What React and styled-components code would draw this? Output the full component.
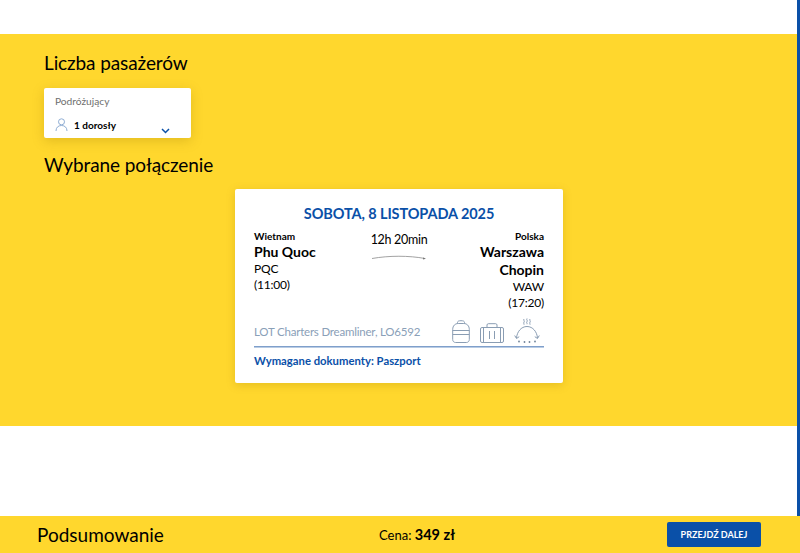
import React from 'react';
import styled, { createGlobalStyle } from 'styled-components';

const GlobalStyle = createGlobalStyle`
  html, body {
    margin: 0;
    padding: 0;
    height: 553px;
    overflow: hidden;
    background: #fff;
    font-family: Lato, "Noto Sans", sans-serif;
    color: #000;
  }
  * { box-sizing: border-box; }
`;

const Page = styled.div`
  width: 800px;
  height: 553px;
  display: flex;
  flex-direction: column;
  border-right: 3px solid #0a50a8;
`;

const TopGap = styled.div`
  height: 34px;
`;

const YellowSection = styled.section`
  height: 392px;
  background: #ffd72d;
  padding: 17px 0 0 44px;
`;

const SectionTitle = styled.h2`
  margin: 0;
  font-size: 19px;
  letter-spacing: -0.1px;
  line-height: 24px;
  font-weight: 400;
`;

const PassengerBox = styled.div`
  position: relative;
  width: 147px;
  height: 50px;
  margin: 13px 0 15px;
  padding: 6px 11px 0;
  background: #fff;
  border-radius: 2px;
  box-shadow: 0 3px 12px rgba(150, 120, 0, 0.28);
`;

const BoxLabel = styled.div`
  font-size: 10.2px;
  line-height: 14px;
  color: #6f6f6f;
`;

const BoxValue = styled.div`
  display: flex;
  align-items: center;
  gap: 6px;
  margin-top: 9px;
  font-size: 10px;
  font-weight: 700;
  line-height: 16px;
`;

const Chevron = styled.svg`
  position: absolute;
  right: 21px;
  bottom: 4px;
`;

const Card = styled.div`
  width: 328px;
  height: 194px;
  margin: 12px 0 0 191px;
  padding: 15px 19px 0;
  background: #fff;
  border-radius: 2px;
  box-shadow: 0 2px 8px rgba(150, 120, 0, 0.25);
`;

const CardDate = styled.h3`
  margin: 0 0 7px;
  text-align: center;
  font-size: 14.5px;
  letter-spacing: -0.1px;
  line-height: 19px;
  font-weight: 700;
  color: #0a50a8;
`;

const RouteRow = styled.div`
  display: grid;
  grid-template-columns: 1fr 88px 1fr;
  height: 81px;
`;

const Place = styled.div`
  text-align: ${(p) => (p.$right ? 'right' : 'left')};
  font-size: 12px;
  letter-spacing: -0.2px;
  line-height: 16px;
`;

const Country = styled.div`
  font-size: 10px;
  letter-spacing: 0;
  line-height: 13px;
  font-weight: 700;
`;

const City = styled.div`
  font-size: 14px;
  letter-spacing: 0;
  line-height: 18px;
  font-weight: 700;
`;

const Duration = styled.div`
  text-align: center;
  font-size: 12.5px;
  letter-spacing: -0.3px;
  line-height: 16px;
  padding-top: 2px;
`;

const FlightRow = styled.div`
  display: flex;
  align-items: flex-end;
  justify-content: space-between;
  height: 36px;
  padding-bottom: 3px;
  border-bottom: 1px solid #7f9fcb;
  box-shadow: 0 1px 0 #b9cce4;
`;

const Plane = styled.span`
  font-size: 11.5px;
  letter-spacing: -0.2px;
  line-height: 16px;
  color: #8aa0b8;
  padding-bottom: 3px;
`;

const Icons = styled.div`
  display: flex;
  align-items: flex-end;
  gap: 10px;
  margin-right: 4px;
`;

const Docs = styled.div`
  margin-top: 6px;
  font-size: 11.3px;
  line-height: 16px;
  font-weight: 700;
  color: #0a50a8;
`;

const Spacer = styled.div`
  flex: 1;
`;

const Footer = styled.footer`
  height: 37px;
  margin-right: -3px;
  background: #ffd72d;
  display: grid;
  grid-template-columns: 342px 288px 94px;
  align-items: center;
  padding-left: 37px;
`;

const FooterTitle = styled.div`
  font-size: 19px;
  line-height: 24px;
`;

const Price = styled.div`
  font-size: 13px;
  b { font-size: 14.5px; font-weight: 700; }
`;

const NextButton = styled.button`
  width: 94px;
  height: 25px;
  border: 0;
  border-radius: 2px;
  background: #0a50a8;
  color: #fff;
  font-family: inherit;
  font-size: 9px;
  font-weight: 700;
  padding: 0;
`;

const PersonIcon = () => (
  <svg width="13" height="14" viewBox="0 0 13 14" fill="none" stroke="#8fadd3" strokeWidth="1">
    <circle cx="6.500" cy="3.800" r="3" />
    <path d="M1 13c0-3.500 2.200-5.500 5.500-5.500S12 9.500 12 13" />
  </svg>
);

const ArcArrow = () => (
  <svg width="56" height="6" viewBox="0 0 56 6" fill="none" style={{ display: 'block', margin: '6px auto 0' }}>
    <path d="M1 4.500C18 1.500 38 1.500 54 4.500" stroke="#8a8a8a" strokeWidth="0.8" />
    <path d="M52 3.500l3 1.200-3 .8z" fill="#777" />
  </svg>
);

const Backpack = () => (
  <svg width="18" height="23" viewBox="0 0 18 23" fill="none" stroke="#8a9db3" strokeWidth="1">
    <path d="M5.500 3.500V2.500C5.500 1.300 6.500 .7 9 .7s3.500.6 3.500 1.800v1" />
    <path d="M.7 9.500c0-3.800 2.500-6 5.500-6h5.600c3 0 5.500 2.200 5.500 6v10c0 1.800-1.200 3-3 3H3.700c-1.800 0-3-1.200-3-3z" />
    <path d="M.7 10.500h16.600M.7 14.500h16.600" />
  </svg>
);

const Suitcase = () => (
  <svg width="24" height="20" viewBox="0 0 24 20" fill="none" stroke="#8a9db3" strokeWidth="1">
    <rect x=".5" y="4.500" width="23" height="15" rx="1.500" />
    <path d="M7 4.500V2c0-.8.6-1.300 1.300-1.300h7.400c.7 0 1.300.5 1.300 1.300v2.500" />
    <path d="M3.500 4.500v15M20.500 4.500v15M9.500 8v8M14.500 8v8" />
  </svg>
);

const Meal = () => (
  <svg width="26" height="25" viewBox="0 0 26 25" fill="none" stroke="#8a9db3" strokeWidth="1">
    <path d="M2.500 20C3 14 7 8.500 13 8.500S23 14 23.500 20" />
    <path d="M.7 17.500l1.800 3 2.700-1.800M25.300 17.500l-1.800 3-2.700-1.800" />
    <path d="M10 1c-1 1.200 1 2 0 3.200s.5 1.500 0 2.500M13 .5c-1 1.200 1 2 0 3.200s.5 1.500 0 2.500M16 1c-1 1.200 1 2 0 3.200s.5 1.500 0 2.500" />
    <g fill="#6f8299" stroke="none">
      <circle cx="5" cy="23.500" r=".9" />
      <circle cx="10.500" cy="24" r=".9" />
      <circle cx="15.500" cy="24" r=".9" />
      <circle cx="21" cy="23.500" r=".9" />
    </g>
  </svg>
);

export default function App() {
  return (
    <>
      <GlobalStyle />
      <Page>
        <TopGap />
        <YellowSection>
          <SectionTitle>Liczba pasażerów</SectionTitle>
          <PassengerBox>
            <BoxLabel>Podróżujący</BoxLabel>
            <BoxValue>
              <PersonIcon />
              1 dorosły
            </BoxValue>
            <Chevron width="9" height="6" viewBox="0 0 9 6" fill="none" stroke="#0a50a8" strokeWidth="1.500">
              <path d="M1 1l3.500 3.500L8 1" />
            </Chevron>
          </PassengerBox>
          <SectionTitle>Wybrane połączenie</SectionTitle>
          <Card>
            <CardDate>SOBOTA, 8 LISTOPADA 2025</CardDate>
            <RouteRow>
              <Place>
                <Country>Wietnam</Country>
                <City>Phu Quoc</City>
                PQC
                <br />
                (11:00)
              </Place>
              <Duration>
                12h 20min
                <ArcArrow />
              </Duration>
              <Place $right>
                <Country>Polska</Country>
                <City>Warszawa Chopin</City>
                WAW
                <br />
                (17:20)
              </Place>
            </RouteRow>
            <FlightRow>
              <Plane>LOT Charters Dreamliner, LO6592</Plane>
              <Icons>
                <Backpack />
                <Suitcase />
                <Meal />
              </Icons>
            </FlightRow>
            <Docs>Wymagane dokumenty: Paszport</Docs>
          </Card>
        </YellowSection>
        <Spacer />
        <Footer>
          <FooterTitle>Podsumowanie</FooterTitle>
          <Price>
            Cena: <b>349 zł</b>
          </Price>
          <NextButton>PRZEJDŹ DALEJ</NextButton>
        </Footer>
      </Page>
    </>
  );
}
